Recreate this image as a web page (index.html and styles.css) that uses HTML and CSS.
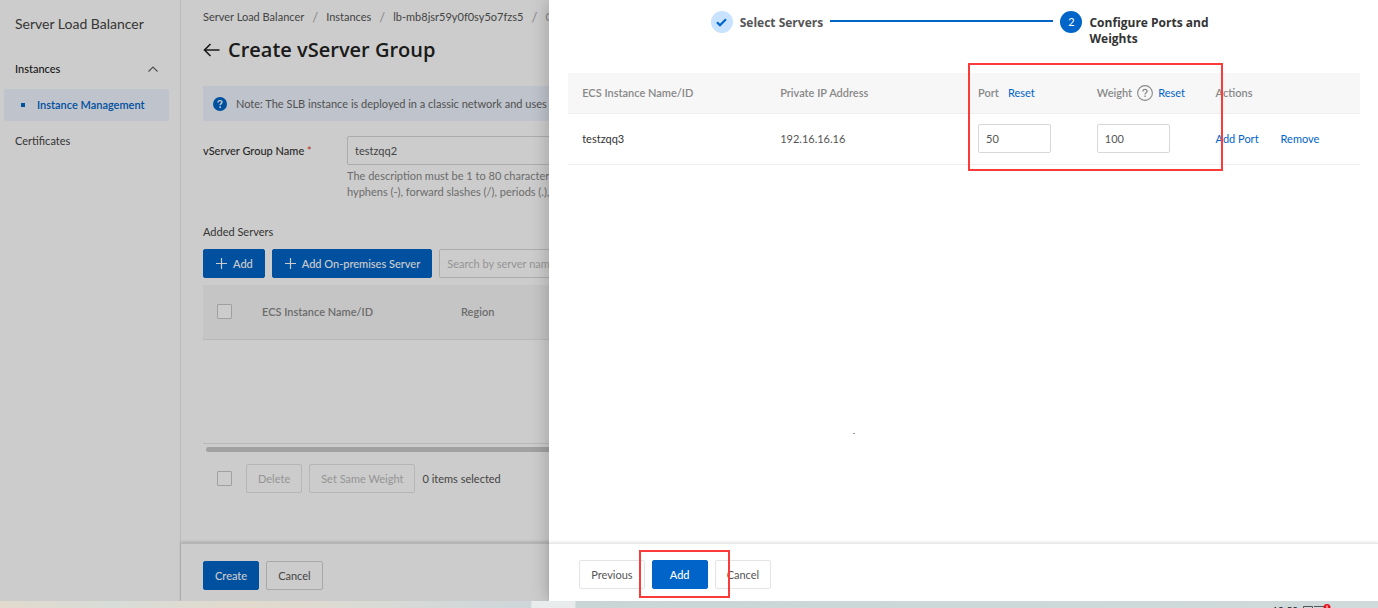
FILE: index.html
```html
<!DOCTYPE html>
<html lang="en">
<head>
    <meta charset="UTF-8">
    <meta name="viewport" content="width=device-width, initial-scale=1.0">
    <title>Create vServer Group</title>
    <link rel="stylesheet" href="styles.css">
</head>
<body>
    <div class="app">
        <!-- Sidebar -->
        <nav class="sidebar">
            <div class="sidebar-title">Server Load Balancer</div>
            <a class="menu-item menu-parent" href="#">Instances
                <svg width="10" height="6" viewBox="0 0 10 6" fill="none" stroke="#666" stroke-width="1.2"><path d="M.5 5.5 5 1l4.500 4.500"/></svg>
            </a>
            <a class="menu-item menu-active" href="#"><span class="menu-dot"></span>Instance Management</a>
            <a class="menu-item" href="#">Certificates</a>
        </nav>

        <!-- Page content -->
        <main class="main">
            <div class="content">
                <div class="breadcrumb">
                    <a href="#">Server Load Balancer</a><i>/</i>
                    <a href="#">Instances</a><i>/</i>
                    <a href="#">lb-mb8jsr59y0f0sy5o7fzs5</a><i>/</i>
                    <span>Create vServer Group</span>
                </div>
                <h1>
                    <svg width="17" height="14" viewBox="0 0 17 14" fill="none" stroke="#222" stroke-width="1.6"><path d="M16.500 7H1.500M7.500 1l-6 6 6 6"/></svg>
                    Create vServer Group
                </h1>
                <div class="notice">
                    <svg width="14" height="14" viewBox="0 0 14 14"><circle cx="7" cy="7" r="7" fill="#0064c8"/><path d="M5 5.500C5 4.200 5.900 3.600 7 3.600s2 .7 2 1.700c0 1.300-1.900 1.400-1.900 2.900" fill="none" stroke="#fff" stroke-width="1.300"/><circle cx="7.100" cy="10.200" r=".9" fill="#fff"/></svg>
                    <span>Note: The SLB instance is deployed in a classic network and uses a</span>
                </div>
                <div class="form-row">
                    <label for="groupName">vServer Group Name <em>*</em></label>
                    <div class="form-field">
                        <input type="text" id="groupName" value="testzqq2">
                        <p>The description must be 1 to 80 characters<br>hyphens (-), forward slashes (/), periods (.),</p>
                    </div>
                </div>
                <h2>Added Servers</h2>
                <div class="toolbar">
                    <button class="btn btn-primary"><svg width="11" height="11" viewBox="0 0 11 11" stroke="#fff" stroke-width="1.200"><path d="M5.500 0v11M0 5.500h11"/></svg>Add</button>
                    <button class="btn btn-primary"><svg width="11" height="11" viewBox="0 0 11 11" stroke="#fff" stroke-width="1.200"><path d="M5.500 0v11M0 5.500h11"/></svg>Add On-premises Server</button>
                    <input type="text" class="search" placeholder="Search by server name" aria-label="Search by server name">
                </div>
                <div class="servers">
                    <table>
                        <thead>
                            <tr>
                                <th class="check-col"><input type="checkbox" aria-label="Select all"></th>
                                <th class="name-col">ECS Instance Name/ID</th>
                                <th>Region</th>
                            </tr>
                        </thead>
                    </table>
                </div>
                <div class="scrollbar"></div>
                <div class="batch">
                    <input type="checkbox" aria-label="Select all items">
                    <button class="btn" disabled>Delete</button>
                    <button class="btn" disabled>Set Same Weight</button>
                    <span>0 items selected</span>
                </div>
            </div>
            <div class="page-footer">
                <button class="btn btn-primary">Create</button>
                <button class="btn">Cancel</button>
            </div>
        </main>

        <div class="mask"></div>

        <!-- Add servers drawer -->
        <section class="drawer">
            <div class="drawer-body">
                <div class="steps">
                    <span class="step-icon step-done"><svg width="11" height="9" viewBox="0 0 11 9" fill="none" stroke="#0064c8" stroke-width="2.200"><path d="M1 4.300 4 7.300 10 1.300"/></svg></span>
                    <span class="step-label">Select Servers</span>
                    <span class="step-line"></span>
                    <span class="step-icon">2</span>
                    <span class="step-label step-current">Configure Ports and Weights</span>
                </div>
                <table class="ports">
                    <thead>
                        <tr>
                            <th>ECS Instance Name/ID</th>
                            <th>Private IP Address</th>
                            <th><div class="head-cell">Port <a href="#">Reset</a></div></th>
                            <th class="weight">
                                <div class="head-cell">Weight
                                <svg width="16" height="16" viewBox="0 0 16 16" fill="none" stroke="#888"><circle cx="8" cy="8" r="7.400" stroke-width="1.100"/><path d="M5.900 6.400c0-1.400 1-2.100 2.100-2.100s2.100.8 2.100 1.900c0 1.500-2 1.500-2 3.200" stroke-width="1.300"/><path d="M8.100 10.500v1.400" stroke-width="1.400"/></svg>
                                <a href="#">Reset</a></div>
                            </th>
                            <th>Actions</th>
                        </tr>
                    </thead>
                    <tbody>
                        <tr>
                            <td class="name">testzqq3</td>
                            <td>192.16.16.16</td>
                            <td><input type="text" value="50" aria-label="Port"></td>
                            <td><input type="text" value="100" aria-label="Weight"></td>
                            <td><div class="actions"><a href="#">Add Port</a><a href="#">Remove</a></div></td>
                        </tr>
                    </tbody>
                </table>
                <span class="speck"></span>
            </div>
            <div class="drawer-footer">
                <button class="btn">Previous</button>
                <button class="btn btn-primary">Add</button>
                <button class="btn">Cancel</button>
            </div>
            <div class="highlight highlight-ports"></div>
            <div class="highlight highlight-add"></div>
        </section>
    </div>

    <!-- Desktop taskbar -->
    <div class="taskbar">
        <span class="clock">10:50</span>
        <svg width="28" height="7" viewBox="0 0 28 7"><path d="M.5 7V5.500h9V7M11 5.500h10" fill="none" stroke="#555"/><circle cx="24" cy="6.500" r="3.500" fill="#e8101c"/><path d="M24 4.500V7" stroke="#fff"/></svg>
    </div>
</body>
</html>
```
FILE: styles.css
```css
* {
    box-sizing: border-box;
}

body {
    font-family: Lato, "Segoe UI", sans-serif;
    font-size: 11px;
    line-height: 16px;
    color: #555;
    margin: 0;
    height: 100vh;
    display: flex;
    flex-direction: column;
    overflow: hidden;
}

a {
    color: #0064c8;
    text-decoration: none;
}

input, button {
    font: inherit;
    color: inherit;
}

input[type="text"] {
    height: 29px;
    padding: 0 7px;
    border: 1px solid #d8d8d8;
    border-radius: 2px;
    background: #fff;
}

input[type="checkbox"] {
    appearance: none;
    width: 15px;
    height: 15px;
    margin: 0;
    border: 1px solid #c8c8c8;
    border-radius: 1px;
    background: #fff;
}

table {
    width: 100%;
    border-collapse: collapse;
    table-layout: fixed;
}

th, td {
    padding: 0 14px;
    text-align: left;
}

th {
    background: #f7f7f7;
    color: #888;
    font-weight: 600;
}

.app {
    flex: 1;
    min-height: 0;
    display: flex;
    position: relative;
    overflow: hidden;
    background: #fff;
}

/* Sidebar */
.sidebar {
    width: 181px;
    flex: none;
    padding: 12px 11px 0 4px;
    border-right: 1px solid #e8e8e8;
}

.sidebar-title {
    height: 41px;
    padding-left: 11px;
    font-size: 14px;
    line-height: 24px;
    color: #444;
}

.menu-item {
    display: flex;
    align-items: center;
    height: 32px;
    margin-bottom: 4px;
    padding: 0 11px;
    border-radius: 2px;
    color: #444;
}

.menu-parent {
    justify-content: space-between;
    font-weight: 500;
    color: #222;
}

.menu-active {
    padding-left: 17px;
    background: #eff5ff;
    color: #0064c8;
    font-weight: 600;
}

.menu-dot {
    width: 4px;
    height: 4px;
    margin-right: 12px;
    background: #0064c8;
}

/* Page content */
.main {
    flex: 1;
    min-width: 0;
    display: flex;
    flex-direction: column;
}

.content {
    flex: 1;
    padding: 9px 22px 0;
}

.breadcrumb {
    display: flex;
    gap: 8px;
    color: #aaa;
    white-space: nowrap;
}

.breadcrumb a {
    color: #555;
}

.breadcrumb i {
    font-size: 13px;
    font-style: normal;
}

h1 {
    display: flex;
    align-items: center;
    gap: 8px;
    margin: 9px 0 20px;
    font-family: "Open Sans", "Segoe UI", sans-serif;
    font-size: 20px;
    line-height: 32px;
    font-weight: 600;
    color: #222;
}

.notice {
    display: flex;
    align-items: center;
    gap: 9px;
    height: 35px;
    margin-bottom: 15px;
    padding: 0 10px;
    background: #eff5ff;
    color: #666;
}

.form-row {
    display: flex;
}

.form-row label {
    width: 144px;
    line-height: 29px;
    font-weight: 500;
    color: #333;
}

.form-row em {
    color: #f04631;
    font-style: normal;
}

.form-field {
    flex: 1;
}

.form-field input {
    display: block;
    width: 100%;
}

.form-field p {
    margin: 3px 0 0;
    color: #888;
}

h2 {
    margin: 24px 0 9px;
    font-size: 11px;
    line-height: 16px;
    font-weight: 400;
    color: #444;
}

.toolbar, .batch, .page-footer, .drawer-footer {
    display: flex;
    gap: 7px;
}

.search {
    width: 260px;
}

.search::placeholder {
    color: #bbb;
}

.btn {
    display: flex;
    align-items: center;
    gap: 6px;
    height: 29px;
    padding: 0 11px;
    border: 1px solid #d2d2d2;
    border-radius: 2px;
    background: #fff;
    white-space: nowrap;
}

.btn-primary {
    border-color: #0064c8;
    background: #0064c8;
    color: #fff;
    font-weight: 500;
}

.toolbar .btn {
    padding: 0 11px 0 12px;
}

.btn:disabled {
    border-color: #e4e4e4;
    color: #bbb;
}

.servers {
    height: 159px;
    margin-top: 7px;
    border-bottom: 1px solid #e8e8e8;
}

.servers th {
    height: 54px;
    border-bottom: 1px solid #e8e8e8;
}

.servers input {
    display: block;
}

.check-col {
    width: 45px;
}

.name-col {
    width: 199px;
}

.scrollbar {
    height: 5px;
    margin: 3px 0 12px 3px;
    border-radius: 3px;
    background: #cacaca;
}

.batch {
    align-items: center;
    padding-left: 14px;
}

.batch input {
    margin-right: 7px;
}

.page-footer {
    height: 58px;
    flex: none;
    padding: 17px 22px 0;
    border-top: 1px solid #e4e4e4;
    box-shadow: 0 -1px 3px rgba(0, 0, 0, 0.2);
}

.page-footer .btn, .drawer-footer .btn {
    min-width: 56px;
    justify-content: center;
}

.mask {
    position: absolute;
    inset: 0;
    background: rgba(0, 0, 0, 0.2);
}

/* Drawer */
.drawer {
    position: absolute;
    top: 0;
    right: 0;
    bottom: 0;
    width: calc(60% + 2px);
    display: flex;
    flex-direction: column;
    background: #fff;
    box-shadow: -2px 0 16px rgba(0, 0, 0, 0.2);
}

.drawer-body {
    flex: 1;
    padding: 11px 18px 0 19px;
}

.steps {
    display: flex;
    gap: 7px;
    width: 64%;
    height: 62px;
    margin: 0 auto;
}

.step-icon {
    display: flex;
    align-items: center;
    justify-content: center;
    width: 22px;
    height: 22px;
    flex: none;
    border-radius: 50%;
    background: #0064c8;
    color: #fff;
}

.step-done {
    background: #c8e2ff;
}

.step-label {
    margin-top: 4px;
    font-family: "Open Sans", "Segoe UI", sans-serif;
    font-size: 12px;
    font-weight: 700;
}

.step-current {
    width: 128px;
    color: #333;
}

.step-line {
    flex: 1;
    height: 2px;
    margin-top: 9px;
    background: #0064c8;
}

.ports th {
    width: 15%;
    height: 40px;
    border-bottom: 1px solid #eee;
}

.ports th:nth-child(-n+2) {
    width: 25%;
}

.ports th:last-child {
    width: 20%;
}

.ports td {
    height: 51px;
    border-bottom: 1px solid #eee;
}

.ports .name {
    color: #333;
}

.ports input {
    display: block;
    width: 73px;
}

.head-cell {
    display: flex;
    align-items: center;
    gap: 9px;
    white-space: nowrap;
}

.weight .head-cell {
    gap: 5px;
}

.head-cell a {
    font-weight: 400;
}

.actions {
    display: flex;
    gap: 22px;
}

.speck {
    display: block;
    width: 2px;
    height: 1px;
    margin: 268px 0 0 285px;
    background: #999;
}

.drawer-footer {
    height: 58px;
    flex: none;
    padding: 16px 30px 0;
    border-top: 1px solid #e8e8e8;
    box-shadow: 0 -1px 3px rgba(0, 0, 0, 0.1);
}

.drawer-footer .btn {
    border-color: #e4e4e4;
}

.drawer-footer .btn-primary {
    border-color: #0064c8;
}

/* Red callout frames */
.highlight {
    position: absolute;
    border: 2px solid #fb3a3a;
    pointer-events: none;
}

.highlight-ports {
    top: 63px;
    right: 155px;
    width: 255px;
    height: 108px;
}

.highlight-add {
    left: 90px;
    bottom: 3px;
    width: 91px;
    height: 48px;
}

/* Taskbar */
.taskbar {
    display: flex;
    justify-content: flex-end;
    gap: 5px;
    height: 7px;
    flex: none;
    padding-right: 47px;
    overflow: hidden;
    background: linear-gradient(90deg, #e2dacd 0%, #d8dcd8 8%, #e2dacd 18%, #d8dad6 28%, #ced6da 38.500%, #e9eced 38.600%, #e9eced 41.700%, #cad6d6 41.800%, #d0dada 100%);
}

.clock {
    padding-top: 3px;
    font-size: 10px;
    line-height: 12px;
    color: #222;
}
```
